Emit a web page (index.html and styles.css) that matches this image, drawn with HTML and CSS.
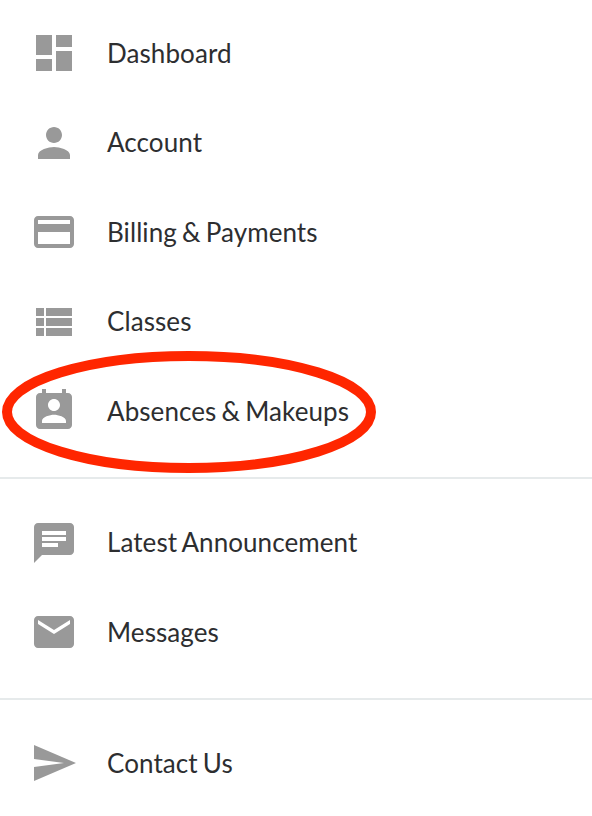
FILE: index.html
```html
<!DOCTYPE html>
<html lang="en">
<head>
  <meta charset="UTF-8">
  <title>Menu</title>
  <link rel="stylesheet" href="styles.css">
</head>
<body>
  <nav class="menu">
    <ul class="menu-group">
      <li class="menu-item">
        <svg class="icon" viewBox="0 0 24 24"><path d="M3 13h8V3H3v10zm0 8h8v-6H3v6zm10 0h8V11h-8v10zm0-18v6h8V3h-8z"/></svg>
        <span class="label">Dashboard</span>
      </li>
      <li class="menu-item">
        <svg class="icon" viewBox="0 0 24 24"><path d="M12 12c2.210 0 4-1.790 4-4s-1.790-4-4-4-4 1.790-4 4 1.790 4 4 4zm0 2c-2.670 0-8 1.340-8 4v2h16v-2c0-2.660-5.330-4-8-4z"/></svg>
        <span class="label">Account</span>
      </li>
      <li class="menu-item">
        <svg class="icon" viewBox="0 0 24 24"><path d="M20 4H4c-1.110 0-1.990.89-1.990 2L2 18c0 1.110.89 2 2 2h16c1.110 0 2-.89 2-2V6c0-1.110-.89-2-2-2zm0 14H4v-6h16v6zm0-10H4V6h16v2z"/></svg>
        <span class="label">Billing &amp; Payments</span>
      </li>
      <li class="menu-item">
        <svg class="icon" viewBox="0 0 24 24"><path d="M3 14h4v-4H3v4zm0 5h4v-4H3v4zM3 9h4V5H3v4zm5 5h13v-4H8v4zm0 5h13v-4H8v4zM8 5v4h13V5H8z"/></svg>
        <span class="label">Classes</span>
      </li>
      <li class="menu-item">
        <svg class="icon" viewBox="0 0 24 24"><path d="M19 3h-1V1h-2v2H8V1H6v2H5c-1.110 0-2 .9-2 2v14c0 1.100.89 2 2 2h14c1.100 0 2-.9 2-2V5c0-1.100-.9-2-2-2zm-7 3c1.660 0 3 1.340 3 3s-1.340 3-3 3-3-1.340-3-3 1.340-3 3-3zm6 12H6v-1c0-2 4-3.100 6-3.100s6 1.100 6 3.100v1z"/></svg>
        <span class="label">Absences &amp; Makeups</span>
        <svg class="highlight" viewBox="0 0 376 124"><ellipse cx="188" cy="62" rx="182" ry="56"/></svg>
      </li>
    </ul>
    <ul class="menu-group">
      <li class="menu-item">
        <svg class="icon" viewBox="0 0 24 24"><path d="M20 2H4c-1.100 0-1.990.9-1.990 2L2 22l4-4h14c1.100 0 2-.9 2-2V4c0-1.100-.9-2-2-2zM6 9h12v2H6V9zm8 5H6v-2h8v2zm4-6H6V6h12v2z"/></svg>
        <span class="label">Latest Announcement</span>
      </li>
      <li class="menu-item">
        <svg class="icon" viewBox="0 0 24 24"><path d="M20 4H4c-1.100 0-1.990.9-1.990 2L2 18c0 1.100.9 2 2 2h16c1.100 0 2-.9 2-2V6c0-1.100-.9-2-2-2zm0 4l-8 5-8-5V6l8 5 8-5v2z"/></svg>
        <span class="label">Messages</span>
      </li>
    </ul>
    <ul class="menu-group">
      <li class="menu-item">
        <svg class="icon" viewBox="0 0 24 24"><path d="M2.010 21L23 12 2.010 3 2 10l15 2-15 2z"/></svg>
        <span class="label">Contact Us</span>
      </li>
    </ul>
  </nav>
</body>
</html>
```
FILE: styles.css
```css
body {
  margin: 0;
  background: #fff;
  font-family: Lato, sans-serif;
  font-size: 26px;
  letter-spacing: 0.08px;
  word-spacing: -1.6px;
  color: #2d2e30;
}
.menu {
  padding-top: 8.5px;
}
.menu-group {
  list-style: none;
  margin: 0;
  padding: 0 0 21px;
}
.menu-group + .menu-group {
  border-top: 2px solid #e6eaeb;
  padding-top: 18.8px;
}
.menu-group:last-child {
  padding-bottom: 0;
}
.menu-item {
  position: relative;
  display: flex;
  align-items: center;
  gap: 29px;
  height: 89.5px;
  padding-left: 30px;
}
.icon {
  width: 48px;
  height: 48px;
  fill: #999;
}
.label {
  padding-bottom: 1px;
}
.highlight {
  position: absolute;
  left: 1px;
  top: -16.5px;
  width: 376px;
  height: 124px;
  fill: none;
  stroke: #ff2600;
  stroke-width: 10;
}
```
